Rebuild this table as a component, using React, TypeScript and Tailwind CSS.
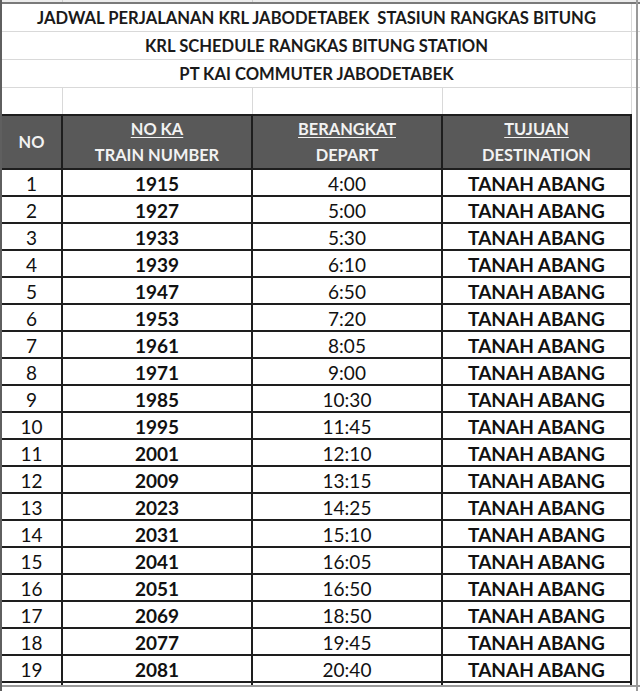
const rows: [number, string, string][] = [
  [1, '1915', '4:00'],
  [2, '1927', '5:00'],
  [3, '1933', '5:30'],
  [4, '1939', '6:10'],
  [5, '1947', '6:50'],
  [6, '1953', '7:20'],
  [7, '1961', '8:05'],
  [8, '1971', '9:00'],
  [9, '1985', '10:30'],
  [10, '1995', '11:45'],
  [11, '2001', '12:10'],
  [12, '2009', '13:15'],
  [13, '2023', '14:25'],
  [14, '2031', '15:10'],
  [15, '2041', '16:05'],
  [16, '2051', '16:50'],
  [17, '2069', '18:50'],
  [18, '2077', '19:45'],
  [19, '2081', '20:40'],
]

const font = { fontFamily: 'Lato, "Liberation Sans", sans-serif' }

function TitleRow({ text }: { text: string }) {
  return (
    <div className="flex">
      <div className="w-[630px] h-[28px] pt-[2px] border-b border-r border-[#d9d9d9] flex items-center justify-center whitespace-pre text-[16.6px] font-bold text-[#1a1a1a]">
        {text}
      </div>
      <div className="w-[8px] border-b border-[#d9d9d9]" />
    </div>
  )
}

export default function App() {
  return (
    <div className="w-[640px] h-[691px] bg-white overflow-hidden relative" style={font}>
      {/* sheet frame lines */}
      <div className="absolute top-0 bottom-0 left-0 w-[2px] bg-[#5f5f5f]" />
      <div className="absolute top-0 bottom-0 right-[2px] w-[2px] bg-[#9a9a9a]" />

      <div className="pl-[2px] flex flex-col">
        {/* cut-off row above */}
        <div className="h-[4px] bg-[#ececec] border-b-2 border-[#7a7a7a] flex">
          <div className="w-[61px] border-r border-[#cfcfcf]" />
          <div className="w-[190px] border-r border-[#cfcfcf]" />
        </div>

        <TitleRow text="JADWAL PERJALANAN KRL JABODETABEK  STASIUN RANGKAS BITUNG" />
        <TitleRow text="KRL SCHEDULE RANGKAS BITUNG STATION" />
        <TitleRow text="PT KAI COMMUTER JABODETABEK" />

        {/* empty spacer row */}
        <div className="flex h-[26px]">
          <div className="w-[61px] border-r border-[#d9d9d9]" />
          <div className="w-[190px] border-r border-[#d9d9d9]" />
          <div className="w-[190px] border-r border-[#d9d9d9]" />
          <div className="w-[189px] border-r border-[#d9d9d9]" />
        </div>

        {/* table */}
        <div className="w-[630px] border-t-2 border-[#1e1e1e]">
          <div className="grid grid-cols-[61px_190px_190px_189px] h-[54px] bg-[#595959] text-[#f2f2f2] font-bold text-[16.4px] border-b-2 border-[#1e1e1e]">
            <div className="border-r-2 border-[#1e1e1e] flex items-center justify-center">NO</div>
            <div className="border-r-2 border-[#1e1e1e] flex flex-col items-center">
              <span className="h-[27px] flex items-center underline underline-offset-2">NO KA</span>
              <span className="h-[25px] flex items-center">TRAIN NUMBER</span>
            </div>
            <div className="border-r-2 border-[#1e1e1e] flex flex-col items-center">
              <span className="h-[27px] flex items-center underline underline-offset-2">BERANGKAT</span>
              <span className="h-[25px] flex items-center">DEPART</span>
            </div>
            <div className="border-r-2 border-[#1e1e1e] flex flex-col items-center">
              <span className="h-[27px] flex items-center underline underline-offset-2">TUJUAN</span>
              <span className="h-[25px] flex items-center">DESTINATION</span>
            </div>
          </div>

          {rows.map(([no, ka, time]) => (
            <div
              key={no}
              className="grid grid-cols-[61px_190px_190px_189px] h-[27px] border-b-2 border-[#1e1e1e] text-[19px] text-[#111]"
            >
              <div className="border-r-2 border-[#1e1e1e] flex items-center justify-center">{no}</div>
              <div className="border-r-2 border-[#1e1e1e] flex items-center justify-center font-bold">{ka}</div>
              <div className="border-r-2 border-[#1e1e1e] flex items-center justify-center">{time}</div>
              <div className="border-r-2 border-[#1e1e1e] flex items-center justify-center font-bold">TANAH ABANG</div>
            </div>
          ))}
        </div>

        {/* rows below */}
        <div className="h-[4px] border-b-2 border-[#9a9a9a]" />
      </div>
    </div>
  )
}
